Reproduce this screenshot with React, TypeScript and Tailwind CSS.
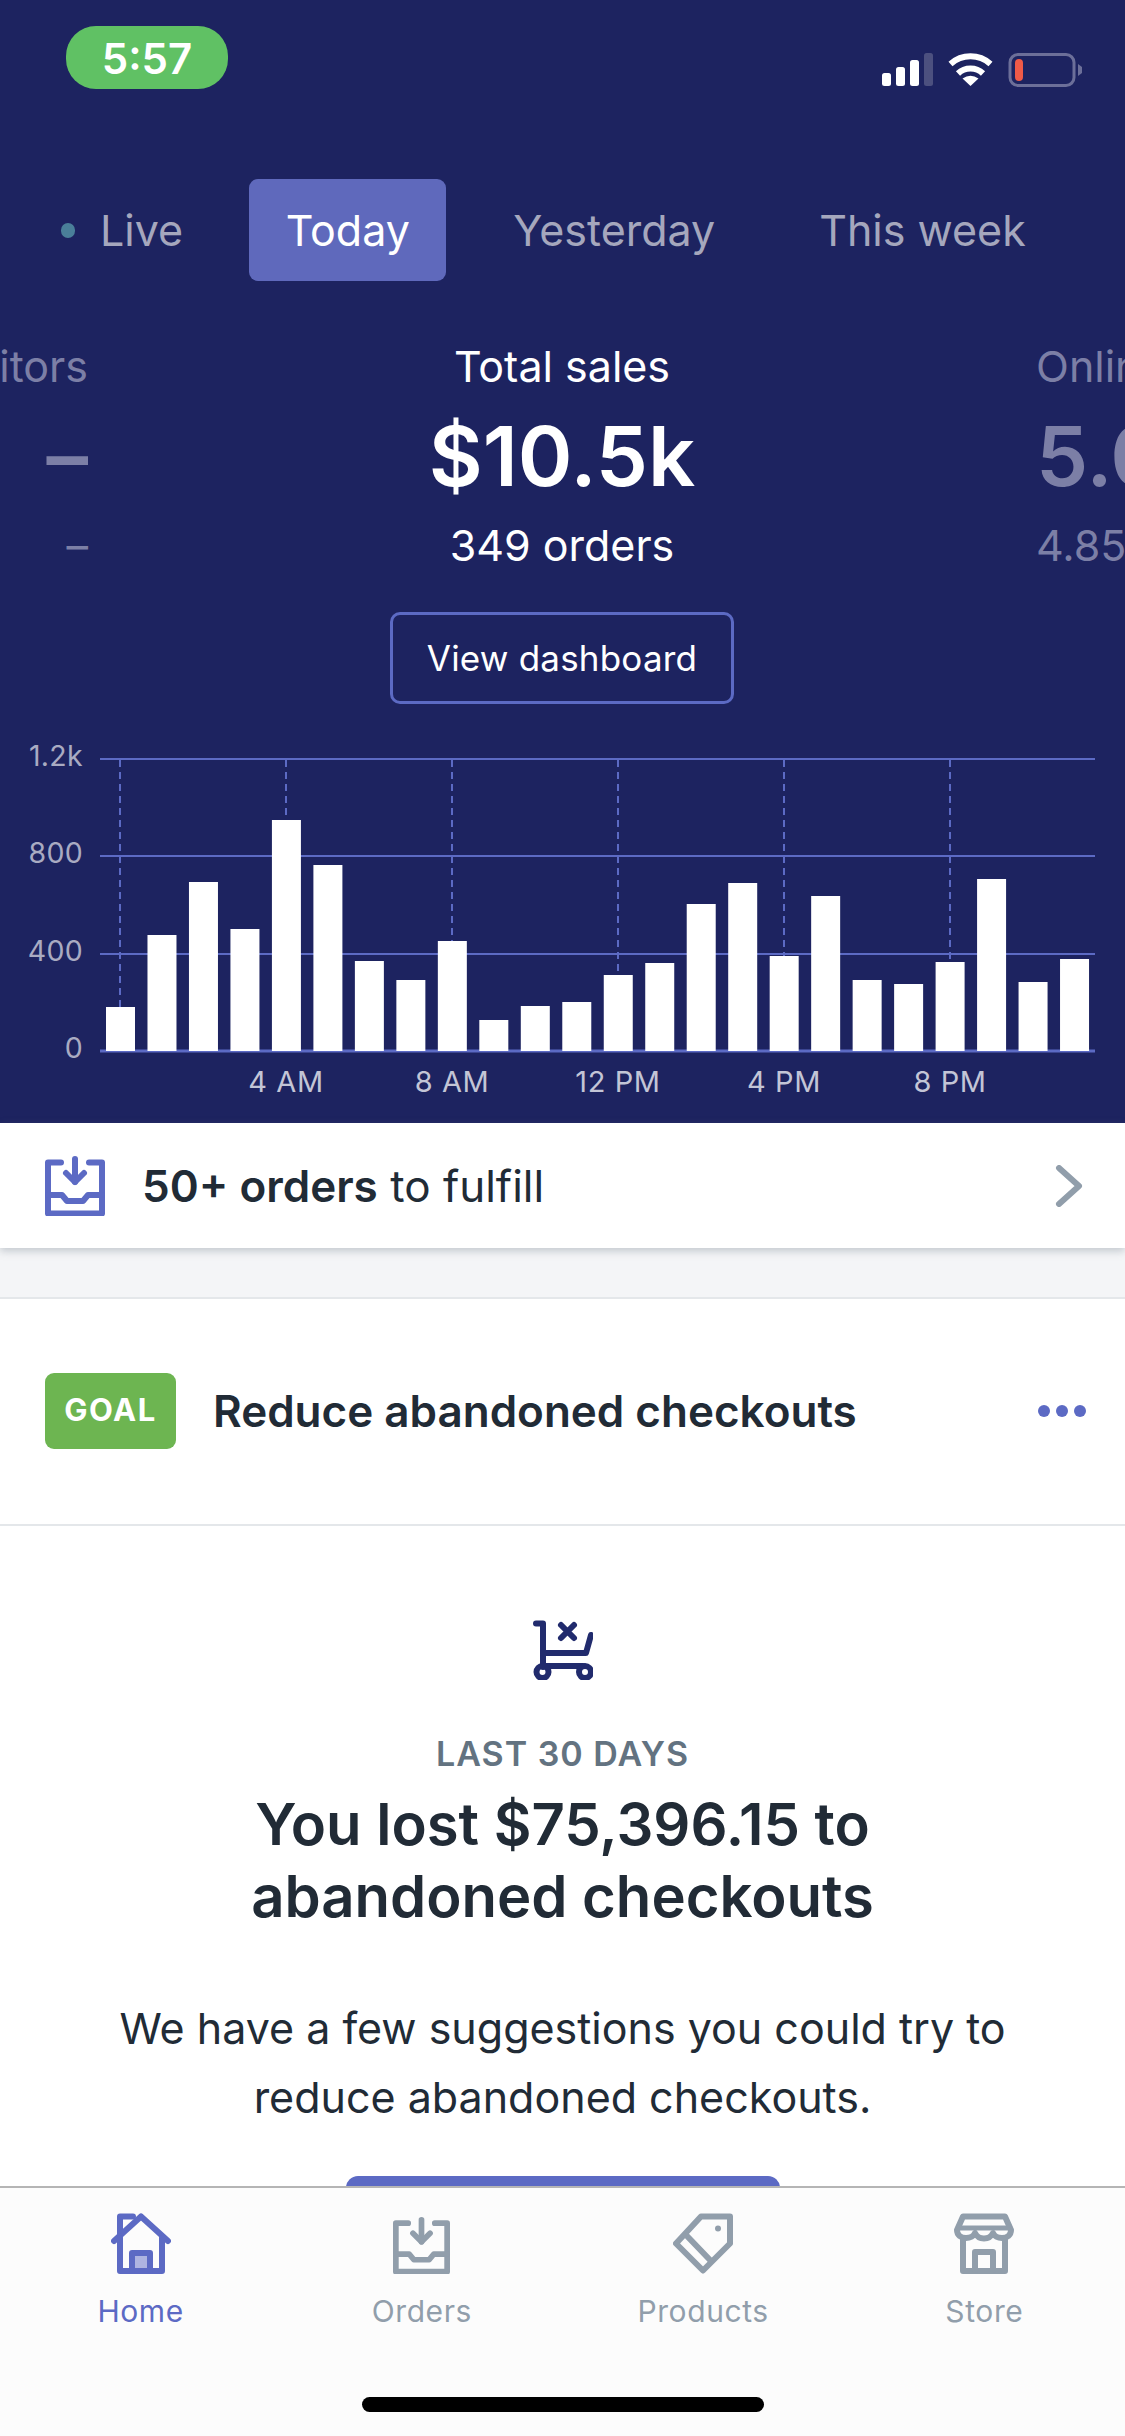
import React from "react";

const bars = [44, 116, 169, 122, 231, 186, 90, 71, 110, 31, 45, 49, 76, 88, 147, 168, 95, 155, 71, 67, 89, 172, 69, 92];
const gridYs = [19, 116, 214];
const yLabels: [string, number][] = [["1.2k", 19], ["800", 116], ["400", 214], ["0", 311]];
const xLabels: [string, number][] = [["4 AM", 286], ["8 AM", 452], ["12 PM", 618], ["4 PM", 784], ["8 PM", 950]];
const dashes = [120, 286, 452, 618, 784, 950];

function Chart() {
  return (
    <svg width="1125" height="383" viewBox="0 0 1125 383" className="block">
      {gridYs.map((y) => (
        <line key={y} x1="100" x2="1095" y1={y} y2={y} stroke="#5c6ac4" strokeWidth="2" />
      ))}
      <line x1="100" x2="1095" y1="311" y2="311" stroke="#5c6ac4" strokeWidth="3" />
      {dashes.map((x) => (
        <line key={x} x1={x} x2={x} y1="20" y2="311" stroke="#5c6ac4" strokeWidth="2" strokeDasharray="7 5" />
      ))}
      {bars.map((h, i) => (
        <rect key={i} x={106 + i * 41.48} y={311 - h} width="29" height={h} fill="#ffffff" />
      ))}
      {yLabels.map(([t, y]) => (
        <text key={t} x="83" y={y + 7} textAnchor="end" fontSize="28.5" fill="#a9abc2" letterSpacing="0.3">
          {t}
        </text>
      ))}
      {xLabels.map(([t, x]) => (
        <text key={t} x={x} y="352" textAnchor="middle" fontSize="29" fill="#c3c5d6" letterSpacing="0.6">
          {t}
        </text>
      ))}
    </svg>
  );
}

function InboxIcon({ color, size = 60 }: { color: string; size?: number }) {
  return (
    <svg width={size} height={size} viewBox="0 0 60 60" fill="none" stroke={color} strokeWidth="6" strokeLinecap="round" strokeLinejoin="round">
      <path d="M16 6.5H3V57.5H57V6.5H44" />
      <path d="M3 39H17L22 45H38L43 39H57" />
      <path d="M30 3V26" />
      <path d="M21 17L30 26L39 17" />
    </svg>
  );
}

function HomeIcon({ color }: { color: string }) {
  return (
    <svg width="60" height="61" viewBox="0 0 60 61" fill="none" stroke={color} strokeWidth="6" strokeLinecap="round" strokeLinejoin="round">
      <path d="M3 28L30 3.5L57 28" />
      <path d="M9 23V3.5H22" />
      <path d="M9 25V58H51V25" />
      <rect x="24" y="43" width="12" height="12" fill="#aeb4e1" stroke="none" />
      <path d="M21 57V40H39V57" />
    </svg>
  );
}

function TagIcon({ color }: { color: string }) {
  return (
    <svg width="60" height="61" viewBox="0 0 60 61" fill="none" stroke={color} strokeWidth="6" strokeLinecap="round" strokeLinejoin="round">
      <path d="M28 3.5H57V30.5L30 57.5L3 30.5Z" />
      <path d="M14 23L37 47" />
      <circle cx="45" cy="15.5" r="3" fill={color} stroke="none" />
    </svg>
  );
}

function StoreIcon({ color }: { color: string }) {
  return (
    <svg width="60" height="61" viewBox="0 0 60 61" fill="none" stroke={color} strokeWidth="6" strokeLinecap="round" strokeLinejoin="round">
      <path d="M9 3.5H51L57 17C57 22 53 25 48 25C44 25 40 23 39 20C37 24 33 25.5 30 25.5C27 25.5 23 24 21 20C20 23 16 25 12 25C7 25 3 22 3 17Z" />
      <path d="M4 15H56" strokeWidth="5" />
      <path d="M9 26V58H51V26" />
      <path d="M21 57V39H39V57" />
    </svg>
  );
}

function CartIcon() {
  return (
    <svg width="60" height="60" viewBox="0 0 60 60" fill="none" stroke="#212b6d" strokeWidth="6" strokeLinecap="round" strokeLinejoin="round">
      <path d="M3 3.5H10V47" />
      <path d="M10 33H53L58 15" />
      <path d="M12 46H50" />
      <circle cx="9.5" cy="52" r="6" />
      <circle cx="52" cy="52" r="6" />
      <path d="M28 5L41 18M41 5L28 18" />
    </svg>
  );
}

function StatusIcons() {
  return (
    <svg width="200" height="34" viewBox="0 0 200 34" fill="none">
      <rect x="0" y="20" width="9" height="13" rx="2.5" fill="#fff" />
      <rect x="14" y="14" width="9" height="19" rx="2.5" fill="#fff" />
      <rect x="28" y="7" width="9" height="26" rx="2.5" fill="#fff" />
      <rect x="42" y="0" width="9" height="33" rx="2.5" fill="#4c507f" />
      <g transform="translate(66,0)">
        <path d="M2.5 11A30 30 0 0 1 42.5 11" stroke="#fff" strokeWidth="6" />
        <path d="M10 20.5A18 18 0 0 1 35 20.5" stroke="#fff" strokeWidth="6" />
        <path d="M22.5 33L14.5 25.5Q22.5 20 30.5 25.5Z" fill="#fff" />
      </g>
      <rect x="128" y="1.5" width="64" height="31" rx="8" stroke="#6c6f99" strokeWidth="3" />
      <rect x="133" y="6" width="8" height="22" rx="4" fill="#ef5a48" />
      <path d="M196 11L200 14V20L196 23Z" fill="#6c6f99" />
    </svg>
  );
}

function NavItem({ label, color, children }: { label: string; color: string; children: React.ReactNode }) {
  return (
    <div className="flex flex-col items-center">
      <div className="flex h-[61px] items-end">{children}</div>
      <span className="mt-[20px] text-[30px] leading-[34px] tracking-[0.6px]" style={{ color }}>
        {label}
      </span>
    </div>
  );
}

export default function App() {
  return (
    <div className="flex h-[2436px] w-[1125px] flex-col overflow-hidden bg-white font-[family-name:Inter,sans-serif] text-[#212b36]">
      <main className="h-[2186px] shrink-0 overflow-hidden">
        <header className="h-[1123px] bg-[#1d2360] text-white">
          <div className="flex h-[179px] items-start justify-between pl-[66px] pr-[43px] pt-[26px]">
            <div className="flex h-[63px] w-[162px] items-center justify-center rounded-[30px] bg-[#60c164] pt-[2px] text-[42px] font-semibold leading-none">
              5:57
            </div>
            <div className="mt-[27px]">
              <StatusIcons />
            </div>
          </div>

          <div className="flex h-[102px] items-stretch gap-[30px] pl-[25px] text-[43px] text-[#a5a7bd]">
            <div className="flex items-center gap-[25px] px-[36px]">
              <span className="h-[15px] w-[14px] rounded-full bg-[#4a7f99]" />
              <span>Live</span>
            </div>
            <div className="flex items-center rounded-[9px] bg-[#5f69bc] px-[36.5px] text-white">Today</div>
            <div className="flex items-center px-[37px]">Yesterday</div>
            <div className="flex items-center px-[37px]">This week</div>
          </div>

          <div className="flex h-[459px] overflow-hidden pt-[60px]">
            <div className="flex w-[88px] shrink-0 flex-col items-end whitespace-nowrap text-[#7c7fa6]">
              <div className="text-[43px] leading-[50px]">Visitors</div>
              <div className="mt-[20px] text-[83px] font-semibold leading-[90px]">–</div>
              <div className="mt-[19px] text-[43px] leading-[50px]">–</div>
            </div>
            <div className="flex w-[948px] shrink-0 flex-col items-center">
              <div className="text-[43px] leading-[50px]">Total sales</div>
              <div className="mt-[20px] text-[83px] font-semibold leading-[90px]">$10.5k</div>
              <div className="mt-[19px] text-[43px] leading-[50px]">349 orders</div>
              <button className="mt-[42px] flex h-[92px] w-[344px] items-center justify-center rounded-[10px] border-[3px] border-[#5c6ac4] text-[35px] tracking-[0.2px]">
                View dashboard
              </button>
            </div>
            <div className="flex shrink-0 flex-col whitespace-nowrap text-[#7c7fa6]">
              <div className="text-[43px] leading-[50px]">Online store</div>
              <div className="mt-[20px] text-[83px] font-semibold leading-[90px]">5.00</div>
              <div className="mt-[19px] text-[43px] leading-[50px]">4.85</div>
            </div>
          </div>

          <Chart />
        </header>

        <div className="relative flex h-[125px] items-center bg-white pl-[45px] pr-[42px] shadow-[0_3px_8px_rgba(99,115,129,0.35)]">
          <InboxIcon color="#5c6ac4" />
          <div className="ml-[37px] flex-1 text-[44px]">
            <span className="font-semibold">50+ orders</span> to fulfill
          </div>
          <svg width="28" height="42" viewBox="0 0 28 42" fill="none" stroke="#919eab" strokeWidth="6" strokeLinecap="round" strokeLinejoin="round">
            <path d="M4 3L24 21L4 39" />
          </svg>
        </div>

        <div className="h-[51px] border-b-2 border-[#e4e7ea] bg-[#f4f5f7]" />

        <div className="flex h-[227px] items-center border-b-2 border-[#e4e7ea] pb-[2px] pl-[45px] pr-[39px]">
          <div className="flex h-[76px] w-[131px] items-center justify-center rounded-[9px] bg-[#6db551] text-[31px] font-bold tracking-[1.5px] text-white">
            GOAL
          </div>
          <div className="ml-[37px] flex-1 text-[44px] font-semibold">Reduce abandoned checkouts</div>
          <div className="flex gap-[6px]">
            <span className="h-[12px] w-[12px] rounded-full bg-[#5c6ac4]" />
            <span className="h-[12px] w-[12px] rounded-full bg-[#5c6ac4]" />
            <span className="h-[12px] w-[12px] rounded-full bg-[#5c6ac4]" />
          </div>
        </div>

        <div className="flex flex-col items-center pt-[94px] text-center">
          <CartIcon />
          <div className="mt-[54px] text-[34px] font-semibold leading-[40px] tracking-[1px] text-[#637381]">LAST 30 DAYS</div>
          <h2 className="mt-[14px] text-[58px] font-semibold leading-[72px]">
            You lost $75,396.15 to
            <br />
            abandoned checkouts
          </h2>
          <p className="mt-[62px] text-[43px] leading-[69px]">
            We have a few suggestions you could try to
            <br />
            reduce abandoned checkouts.
          </p>
          <div className="mt-[44px] h-[96px] w-[434px] rounded-[12px] bg-[#5c6ac4]" />
        </div>
      </main>

      <nav className="flex h-[250px] shrink-0 flex-col border-t-2 border-[#b5b5b5] bg-[#fcfcfc]">
        <div className="grid grid-cols-4 pt-[25px]">
          <NavItem label="Home" color="#5c6ac4">
            <HomeIcon color="#5c6ac4" />
          </NavItem>
          <NavItem label="Orders" color="#919eab">
            <InboxIcon color="#919eab" size={57} />
          </NavItem>
          <NavItem label="Products" color="#919eab">
            <TagIcon color="#919eab" />
          </NavItem>
          <NavItem label="Store" color="#919eab">
            <StoreIcon color="#919eab" />
          </NavItem>
        </div>
        <div className="mx-auto mb-[24px] mt-auto h-[15px] w-[402px] rounded-full bg-black" />
      </nav>
    </div>
  );
}
